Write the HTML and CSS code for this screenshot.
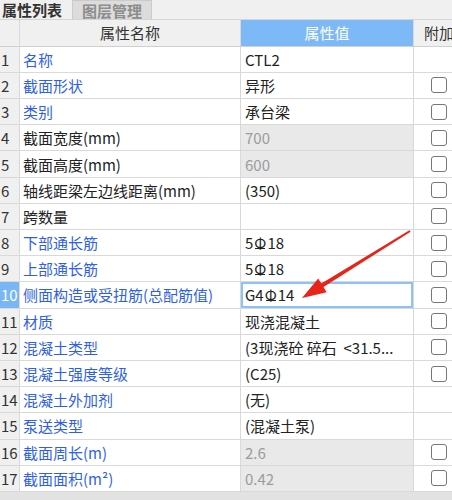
FILE: index.html
```html
<!DOCTYPE html>
<html lang="zh-CN">
<head>
    <meta charset="UTF-8">
    <title>属性列表</title>
    <link rel="stylesheet" href="styles.css">
</head>
<body>
    <div class="panel">
        <div class="tabs">
            <div class="tab">属性列表</div>
            <div class="tab off">图层管理</div>
        </div>

        <div class="row head">
            <div class="cell num"></div>
            <div class="cell name">属性名称</div>
            <div class="cell val">属性值</div>
            <div class="cell add">附加</div>
        </div>

        <div class="row">
            <div class="cell num">1</div>
            <div class="cell name blue">名称</div>
            <div class="cell val">CTL2</div>
            <div class="cell add"></div>
        </div>
        <div class="row">
            <div class="cell num">2</div>
            <div class="cell name blue">截面形状</div>
            <div class="cell val">异形</div>
            <div class="cell add"><span class="chk"></span></div>
        </div>
        <div class="row">
            <div class="cell num">3</div>
            <div class="cell name blue">类别</div>
            <div class="cell val">承台梁</div>
            <div class="cell add"><span class="chk"></span></div>
        </div>
        <div class="row">
            <div class="cell num">4</div>
            <div class="cell name">截面宽度(mm)</div>
            <div class="cell val off">700</div>
            <div class="cell add"><span class="chk"></span></div>
        </div>
        <div class="row">
            <div class="cell num">5</div>
            <div class="cell name">截面高度(mm)</div>
            <div class="cell val off">600</div>
            <div class="cell add"><span class="chk"></span></div>
        </div>
        <div class="row">
            <div class="cell num">6</div>
            <div class="cell name">轴线距梁左边线距离(mm)</div>
            <div class="cell val">(350)</div>
            <div class="cell add"><span class="chk"></span></div>
        </div>
        <div class="row">
            <div class="cell num">7</div>
            <div class="cell name">跨数量</div>
            <div class="cell val"></div>
            <div class="cell add"><span class="chk"></span></div>
        </div>
        <div class="row">
            <div class="cell num">8</div>
            <div class="cell name blue">下部通长筋</div>
            <div class="cell val">5<span class="rebar">Φ</span>18</div>
            <div class="cell add"><span class="chk"></span></div>
        </div>
        <div class="row">
            <div class="cell num">9</div>
            <div class="cell name blue">上部通长筋</div>
            <div class="cell val">5<span class="rebar">Φ</span>18</div>
            <div class="cell add"><span class="chk"></span></div>
        </div>
        <div class="row">
            <div class="cell num sel">10</div>
            <div class="cell name blue">侧面构造或受扭筋(总配筋值)</div>
            <div class="cell val edit">G4<span class="rebar">Φ</span>14</div>
            <div class="cell add"><span class="chk"></span></div>
        </div>
        <div class="row">
            <div class="cell num">11</div>
            <div class="cell name blue">材质</div>
            <div class="cell val">现浇混凝土</div>
            <div class="cell add"><span class="chk"></span></div>
        </div>
        <div class="row">
            <div class="cell num">12</div>
            <div class="cell name blue">混凝土类型</div>
            <div class="cell val">(3现浇砼 碎石 &nbsp;&lt;31.5...</div>
            <div class="cell add"><span class="chk"></span></div>
        </div>
        <div class="row">
            <div class="cell num">13</div>
            <div class="cell name blue">混凝土强度等级</div>
            <div class="cell val">(C25)</div>
            <div class="cell add"><span class="chk"></span></div>
        </div>
        <div class="row">
            <div class="cell num">14</div>
            <div class="cell name blue">混凝土外加剂</div>
            <div class="cell val">(无)</div>
            <div class="cell add"></div>
        </div>
        <div class="row">
            <div class="cell num">15</div>
            <div class="cell name blue">泵送类型</div>
            <div class="cell val">(混凝土泵)</div>
            <div class="cell add"></div>
        </div>
        <div class="row">
            <div class="cell num">16</div>
            <div class="cell name blue">截面周长(m)</div>
            <div class="cell val off">2.6</div>
            <div class="cell add"><span class="chk"></span></div>
        </div>
        <div class="row">
            <div class="cell num">17</div>
            <div class="cell name blue">截面面积(m²)</div>
            <div class="cell val off">0.42</div>
            <div class="cell add"><span class="chk"></span></div>
        </div>

        <!-- red annotation arrow pointing at row 10 -->
        <svg class="arrow" width="452" height="500" viewBox="0 0 452 500">
            <polygon fill="#e8231a" points="409.4,230.2 410.6,231.8 323.5,287.1 326.6,292.2 302,298 318.2,278.5 321.3,283.6"/>
        </svg>
    </div>
</body>
</html>
```

FILE: styles.css
```css
body {
    margin: 0;
    width: 452px;
    height: 500px;
    overflow: hidden;
    background: #e2e2e2;
    font-family: "Noto Sans CJK SC", "Noto Sans", sans-serif;
    font-size: 15px;
    color: #222;
}
.panel {
    position: relative;
    width: 464px;
}
.tabs {
    display: flex;
    height: 20px;
    box-sizing: border-box;
    background: #f0f0f0;
    border-bottom: 1px solid #d4d4d4;
}
.tab {
    padding: 0 10px 0 2px;
    line-height: 19px;
    font-weight: bold;
    color: #333;
}
.tab.off {
    width: 80px;
    box-sizing: border-box;
    padding: 0;
    text-align: center;
    background: #dcdcdc;
    border: 1px solid #cbcbcb;
    border-bottom: none;
    color: #8d8d8d;
}
.row {
    display: grid;
    grid-template-columns: 20px 221px 173px 50px;
    height: 26.2px;
    background: #fff;
}
.row.head {
    height: 26.7px;
    background: #f0f0f0;
}
.cell {
    box-sizing: border-box;
    display: flex;
    align-items: center;
    padding-left: 3px;
    border-right: 1px solid #d9d9d9;
    border-bottom: 1px solid #d9d9d9;
    white-space: nowrap;
    overflow: hidden;
}
.head .cell {
    justify-content: center;
    padding: 0;
    color: #333;
    border-bottom-color: #d0d0d0;
}
.head .val {
    background: #7db9f6;
    color: #fff;
}
.num {
    padding-left: 1px;
    background: #f0f0f0;
    color: #333;
}
.num.sel {
    background: #78b6f5;
    color: #fff;
}
.val {
    padding-left: 4px;
}
.val.off {
    background: #e9e9e9;
    color: #9c9c9c;
}
.val.edit {
    box-shadow: inset 0 0 0 2px #8cc2f4;
}
.blue {
    color: #2f5fe6;
}
.add {
    justify-content: center;
    padding: 0;
    border-right: none;
}
.chk {
    width: 16px;
    height: 16px;
    box-sizing: border-box;
    border: 1px solid #777;
    border-radius: 3px;
    background: #fff;
}
.rebar {
    position: relative;
    display: inline-block;
    margin: 0 1px;
}
.rebar::after {
    content: "";
    position: absolute;
    left: 1px;
    right: 1px;
    bottom: 4px;
    height: 1.5px;
    background: currentColor;
}
.arrow {
    position: absolute;
    top: 0;
    left: 0;
    pointer-events: none;
}
```
